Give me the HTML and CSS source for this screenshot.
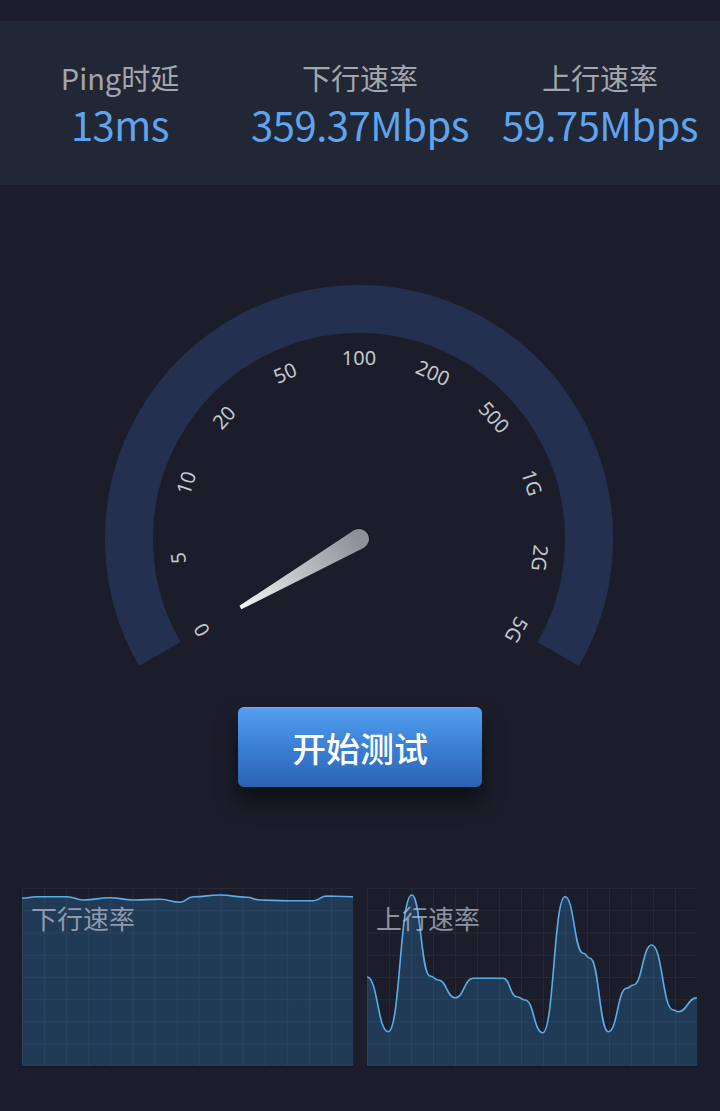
FILE: index.html
```html
<!DOCTYPE html>
<html lang="zh-CN">
<head>
<meta charset="utf-8">
<title>网速测试</title>
<link rel="stylesheet" href="styles.css">
</head>
<body>
<div class="page">
  <section class="stats">
    <div class="stat">
      <div class="stat-label">Ping时延</div>
      <div class="stat-value">13ms</div>
    </div>
    <div class="stat">
      <div class="stat-label">下行速率</div>
      <div class="stat-value">359.37Mbps</div>
    </div>
    <div class="stat">
      <div class="stat-label">上行速率</div>
      <div class="stat-value">59.75Mbps</div>
    </div>
  </section>

  <section class="gauge">
    <svg class="gauge-svg" width="720" height="500" viewBox="0 185 720 500">
      <defs>
        <linearGradient id="needleGrad" gradientUnits="userSpaceOnUse" x1="0" y1="0" x2="0" y2="-137">
          <stop offset="0" stop-color="#8d9097"/>
          <stop offset="1" stop-color="#f2f3f6"/>
        </linearGradient>
      </defs>
      <path class="ring" d="M159.8 654 A230 230 0 1 1 558.2 654"/>
      <g class="ticks">
        <text x="359" y="357" transform="rotate(-120 359 539)">0</text>
        <text x="359" y="357" transform="rotate(-96 359 539)">5</text>
        <text x="359" y="357" transform="rotate(-72 359 539)">10</text>
        <text x="359" y="357" transform="rotate(-48 359 539)">20</text>
        <text x="359" y="357" transform="rotate(-24 359 539)">50</text>
        <text x="359" y="357">100</text>
        <text x="359" y="357" transform="rotate(24 359 539)">200</text>
        <text x="359" y="357" transform="rotate(48 359 539)">500</text>
        <text x="359" y="357" transform="rotate(72 359 539)">1G</text>
        <text x="359" y="357" transform="rotate(96 359 539)">2G</text>
        <text x="359" y="357" transform="rotate(120 359 539)">5G</text>
      </g>
      <g transform="translate(359 539) rotate(-120)">
        <path class="needle-shadow" d="M-10 1 L-2 -136 L2.5 -136 L10.5 1 A10 10 0 0 1 -10 1 Z"/>
        <path class="needle" d="M-10 0 L-2 -137 L2 -137 L10 0 A10 10 0 0 1 -10 0 Z"/>
      </g>
    </svg>
  </section>

  <div class="action">
    <button class="start-btn">开始测试</button>
  </div>

  <section class="charts">
    <div class="chart chart-left">
      <svg class="chart-svg" width="331" height="178" viewBox="0 0 331 178">
        <defs>
          <pattern id="gridL" width="22.07" height="22.25" patternUnits="userSpaceOnUse">
            <path class="grid-line" d="M0.5 0 V22.25 M0 0.5 H22.07"/>
          </pattern>
        </defs>
        <path class="area" d="M0,10.3 C7.4,10.3 7.4,8.7 14.7,8.7 L44.7,8.7 C53,8.7 53,12 61.3,12 C74.7,12 74.7,9.7 88,9.7 C99.7,9.7 99.7,12 111.3,12 C124.7,12 124.7,11.3 138,11.3 C148,11.3 148,14.3 158,14.3 C164.7,14.3 164.7,8.7 171.3,8.7 C184.7,8.7 184.7,7 198,7 C211.3,7 211.3,9.3 224.7,9.3 C231.3,9.3 231.3,12 238,12 C251.3,12 251.3,12.7 264.7,12.7 L291.3,12.7 C298,12.7 298,8 304.7,8 L331,8.7 L331,178 L0,178 Z"/>
        <rect width="331" height="178" fill="url(#gridL)"/>
        <path class="line" d="M0,10.3 C7.4,10.3 7.4,8.7 14.7,8.7 L44.7,8.7 C53,8.7 53,12 61.3,12 C74.7,12 74.7,9.7 88,9.7 C99.7,9.7 99.7,12 111.3,12 C124.7,12 124.7,11.3 138,11.3 C148,11.3 148,14.3 158,14.3 C164.7,14.3 164.7,8.7 171.3,8.7 C184.7,8.7 184.7,7 198,7 C211.3,7 211.3,9.3 224.7,9.3 C231.3,9.3 231.3,12 238,12 C251.3,12 251.3,12.7 264.7,12.7 L291.3,12.7 C298,12.7 298,8 304.7,8 L331,8.7"/>
      </svg>
      <span class="chart-label">下行速率</span>
    </div>
    <div class="chart chart-right">
      <svg class="chart-svg" width="330" height="178" viewBox="0 0 330 178">
        <defs>
          <pattern id="gridR" width="22" height="22.25" patternUnits="userSpaceOnUse">
            <path class="grid-line" d="M0.5 0 V22.25 M0 0.5 H22"/>
          </pattern>
        </defs>
        <path class="area" d="M0,89 C10.7,89 10.7,143.7 21.3,143.7 C33,143.7 33,7 44.7,7 C53.9,7 53.9,88 63,88 C67.2,88 67.2,92 71.3,92 C79.7,92 79.7,109.7 88,109.7 C97.2,109.7 97.2,90.3 106.3,90.3 L136.3,90.3 C143,90.3 143,108.7 149.7,108.7 C153.9,108.7 153.9,112 158,112 C166.9,112 166.9,144.7 175.7,144.7 C186.9,144.7 186.9,8.7 198,8.7 C207.2,8.7 207.2,65.3 216.3,65.3 C219.7,65.3 219.7,70.3 223,70.3 C232.2,70.3 232.2,143.7 241.3,143.7 C250.5,143.7 250.5,100.3 259.7,100.3 C263,100.3 263,97 266.3,97 C275.5,97 275.5,57 284.7,57 C295.5,57 295.5,122 306.3,122 C308.8,122 308.8,123.7 311.3,123.7 C320.5,123.7 320.5,109.7 330,109.7 L330,178 L0,178 Z"/>
        <rect width="330" height="178" fill="url(#gridR)"/>
        <path class="line" d="M0,89 C10.7,89 10.7,143.7 21.3,143.7 C33,143.7 33,7 44.7,7 C53.9,7 53.9,88 63,88 C67.2,88 67.2,92 71.3,92 C79.7,92 79.7,109.7 88,109.7 C97.2,109.7 97.2,90.3 106.3,90.3 L136.3,90.3 C143,90.3 143,108.7 149.7,108.7 C153.9,108.7 153.9,112 158,112 C166.9,112 166.9,144.7 175.7,144.7 C186.9,144.7 186.9,8.7 198,8.7 C207.2,8.7 207.2,65.3 216.3,65.3 C219.7,65.3 219.7,70.3 223,70.3 C232.2,70.3 232.2,143.7 241.3,143.7 C250.5,143.7 250.5,100.3 259.7,100.3 C263,100.3 263,97 266.3,97 C275.5,97 275.5,57 284.7,57 C295.5,57 295.5,122 306.3,122 C308.8,122 308.8,123.7 311.3,123.7 C320.5,123.7 320.5,109.7 330,109.7"/>
      </svg>
      <span class="chart-label">上行速率</span>
    </div>
  </section>
</div>
</body>
</html>
```

FILE: styles.css
```css
html, body {
  margin: 0;
  padding: 0;
  background: #1b1e2a;
}

body {
  width: 720px;
  height: 1111px;
  overflow: hidden;
  font-family: "Noto Sans CJK SC", "Noto Sans", sans-serif;
}

.page {
  padding-top: 21px;
}

.stats {
  display: flex;
  height: 164px;
  background: #222736;
  box-sizing: border-box;
  padding-top: 38px;
}

.stat {
  flex: 1;
  display: flex;
  flex-direction: column;
  align-items: center;
}

.stat-label {
  font-size: 29px;
  line-height: 36px;
  color: #a3a6ae;
}

.stat-value {
  margin-top: 4px;
  font-size: 40px;
  line-height: 50px;
  color: #5ea4ee;
  letter-spacing: -0.5px;
}

.gauge-svg {
  display: block;
}

.ring {
  fill: none;
  stroke: #243050;
  stroke-width: 48;
}

.ticks text {
  font-family: "Noto Sans", "Open Sans", sans-serif;
  font-size: 20px;
  fill: #c3c7cf;
  text-anchor: middle;
  dominant-baseline: central;
}

.needle {
  fill: url(#needleGrad);
}

.needle-shadow {
  fill: rgba(0, 0, 0, 0.35);
}

.action {
  display: flex;
  justify-content: center;
  margin-top: 22px;
}

.start-btn {
  width: 244px;
  height: 80px;
  border: none;
  border-radius: 6px;
  background: linear-gradient(180deg, #55a0f0 0%, #3a7fd4 50%, #2b63b2 100%);
  box-shadow: 0 14px 22px rgba(0, 0, 0, 0.55), inset 0 1px 0 rgba(255, 255, 255, 0.15);
  color: #ffffff;
  font-family: "Noto Sans CJK SC", sans-serif;
  font-size: 34px;
  font-weight: 500;
  padding: 0;
  margin-left: 0;
}

.charts {
  display: flex;
  gap: 14px;
  margin-top: 101px;
  padding-left: 22px;
}

.chart {
  position: relative;
  height: 178px;
  border-bottom: 2px solid #141721;
}

.chart-left {
  width: 331px;
}

.chart-right {
  width: 330px;
}

.chart-svg {
  display: block;
}

.area {
  fill: #213a55;
}

.grid-line {
  fill: none;
  stroke: rgba(130, 160, 200, 0.09);
  stroke-width: 1;
}

.line {
  fill: none;
  stroke: #5aaee8;
  stroke-width: 1.6;
}

.chart-label {
  position: absolute;
  left: 9px;
  top: 12px;
  font-size: 26px;
  line-height: 36px;
  color: rgba(185, 192, 205, 0.72);
}
```
